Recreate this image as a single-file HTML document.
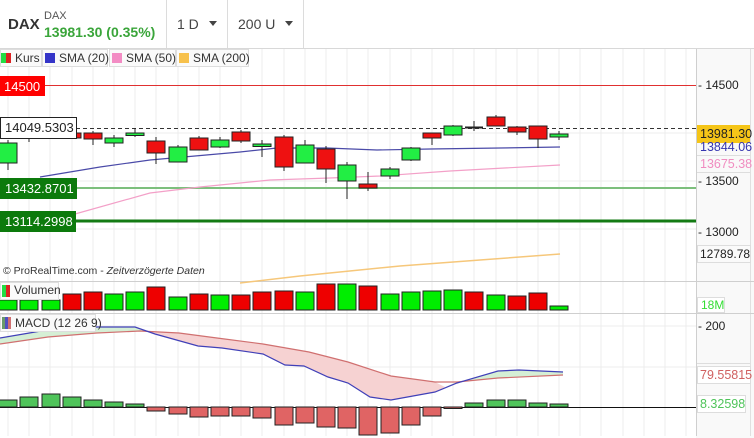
<!DOCTYPE html>
<html><head><meta charset="utf-8"><style>
body{margin:0;width:754px;height:438px;overflow:hidden;background:#fff;font-family:"Liberation Sans",sans-serif;}
svg{display:block}
</style></head><body>
<svg width="754" height="438" viewBox="0 0 754 438" xmlns="http://www.w3.org/2000/svg" font-family="Liberation Sans, sans-serif">
<rect x="0" y="0" width="754" height="48" fill="#fff"/>
<line x1="0" y1="48.5" x2="754" y2="48.5" stroke="#d8d8d8"/>
<line x1="166.5" y1="0" x2="166.5" y2="48" stroke="#dcdcdc"/>
<line x1="227.5" y1="0" x2="227.5" y2="48" stroke="#dcdcdc"/>
<line x1="303.5" y1="0" x2="303.5" y2="48" stroke="#dcdcdc"/>
<text x="8" y="29" font-size="15" font-weight="bold" fill="#333">DAX</text>
<text x="44" y="19" font-size="11" fill="#555">DAX</text>
<text x="44" y="37" font-size="14" font-weight="bold" fill="#3aa53a">13981.30 (0.35%)</text>
<text x="177" y="29" font-size="14" fill="#444">1 D</text>
<path d="M209 21h8l-4 5z" fill="#444"/>
<text x="238" y="29" font-size="14" fill="#444">200 U</text>
<path d="M285 21h8l-4 5z" fill="#444"/>

<g stroke="#ececec" stroke-width="1">
<line x1="8" y1="49" x2="8" y2="436"/><line x1="29" y1="49" x2="29" y2="436"/><line x1="50" y1="49" x2="50" y2="436"/><line x1="72" y1="49" x2="72" y2="436"/><line x1="93" y1="49" x2="93" y2="436"/><line x1="114" y1="49" x2="114" y2="436"/><line x1="135" y1="49" x2="135" y2="436"/><line x1="156" y1="49" x2="156" y2="436"/><line x1="178" y1="49" x2="178" y2="436"/><line x1="199" y1="49" x2="199" y2="436"/><line x1="220" y1="49" x2="220" y2="436"/><line x1="241" y1="49" x2="241" y2="436"/><line x1="262" y1="49" x2="262" y2="436"/><line x1="284" y1="49" x2="284" y2="436"/><line x1="305" y1="49" x2="305" y2="436"/><line x1="326" y1="49" x2="326" y2="436"/><line x1="347" y1="49" x2="347" y2="436"/><line x1="368" y1="49" x2="368" y2="436"/><line x1="390" y1="49" x2="390" y2="436"/><line x1="411" y1="49" x2="411" y2="436"/><line x1="432" y1="49" x2="432" y2="436"/><line x1="453" y1="49" x2="453" y2="436"/><line x1="474" y1="49" x2="474" y2="436"/><line x1="496" y1="49" x2="496" y2="436"/><line x1="517" y1="49" x2="517" y2="436"/><line x1="538" y1="49" x2="538" y2="436"/><line x1="559" y1="49" x2="559" y2="436"/><line x1="580" y1="49" x2="580" y2="436"/><line x1="601" y1="49" x2="601" y2="436"/><line x1="623" y1="49" x2="623" y2="436"/><line x1="644" y1="49" x2="644" y2="436"/><line x1="665" y1="49" x2="665" y2="436"/><line x1="686" y1="49" x2="686" y2="436"/>
<line x1="0" y1="133" x2="696" y2="133"/><line x1="0" y1="181" x2="696" y2="181"/><line x1="0" y1="229" x2="696" y2="229"/><line x1="0" y1="367" x2="696" y2="367"/><line x1="0" y1="326" x2="696" y2="326"/>
</g>

<rect x="696" y="49" width="58" height="389" fill="#f9f9f9"/>
<line x1="696.5" y1="49" x2="696.5" y2="436" stroke="#cfcfcf"/>
<line x1="750.5" y1="49" x2="750.5" y2="436" stroke="#e0e0e0"/>
<line x1="0" y1="281.5" x2="754" y2="281.5" stroke="#cfcfcf"/>
<line x1="0" y1="313.5" x2="754" y2="313.5" stroke="#cfcfcf"/>

<line x1="0" y1="85.5" x2="696" y2="85.5" stroke="#e03030" stroke-width="1"/>
<line x1="76" y1="128.5" x2="696" y2="128.5" stroke="#333" stroke-dasharray="4,3"/>
<line x1="0" y1="188" x2="696" y2="188" stroke="#7dbf7d" stroke-width="2"/>
<line x1="0" y1="221" x2="696" y2="221" stroke="#137a13" stroke-width="3"/>

<polyline points="40,177 100,167 150,160 240,152 277,148 327,148 377,150 430,149 500,148 560,147" fill="none" stroke="#4a4aa8" stroke-width="1.2"/>
<polyline points="75,214 150,193 200,187 270,180 330,178 380,176 450,171 560,165" fill="none" stroke="#f3a0c8" stroke-width="1.2"/>
<polyline points="240,283 300,276 400,266 480,260 560,254" fill="none" stroke="#f6c77a" stroke-width="1.5"/>

<g stroke="#222" stroke-width="1">
<line x1="8" y1="140" x2="8" y2="170"/><rect x="-1" y="143" width="18" height="20" fill="#22ee44"/>
<line x1="29" y1="134" x2="29" y2="142"/>
<rect x="63" y="133" width="18" height="5" fill="#ee1111"/>
<line x1="93" y1="131" x2="93" y2="145"/><rect x="84" y="133" width="18" height="6" fill="#ee1111"/>
<line x1="114" y1="135" x2="114" y2="147"/><rect x="105" y="138" width="18" height="5" fill="#22ee44"/>
<line x1="135" y1="128" x2="135" y2="137"/><rect x="126" y="133" width="18" height="2.5" fill="#22ee44"/>
<line x1="156" y1="137" x2="156" y2="164"/><rect x="147" y="141" width="18" height="12" fill="#ee1111"/>
<line x1="178" y1="145" x2="178" y2="162"/><rect x="169" y="147" width="18" height="15" fill="#22ee44"/>
<line x1="199" y1="136" x2="199" y2="150"/><rect x="190" y="138" width="18" height="12" fill="#ee1111"/>
<line x1="220" y1="137" x2="220" y2="148"/><rect x="211" y="140" width="18" height="7" fill="#22ee44"/>
<line x1="241" y1="130" x2="241" y2="143"/><rect x="232" y="132" width="18" height="9" fill="#ee1111"/>
<line x1="262" y1="140" x2="262" y2="157"/><rect x="253" y="144" width="18" height="2.5" fill="#22ee44"/>
<line x1="284" y1="135" x2="284" y2="171"/><rect x="275" y="137" width="18" height="30" fill="#ee1111"/>
<line x1="305" y1="140" x2="305" y2="163"/><rect x="296" y="145" width="18" height="18" fill="#22ee44"/>
<line x1="326" y1="146" x2="326" y2="183"/><rect x="317" y="149" width="18" height="20" fill="#ee1111"/>
<line x1="347" y1="162" x2="347" y2="199"/><rect x="338" y="165" width="18" height="16" fill="#22ee44"/>
<line x1="368" y1="172" x2="368" y2="191"/><rect x="359" y="184" width="18" height="4" fill="#ee1111"/>
<line x1="390" y1="167" x2="390" y2="179"/><rect x="381" y="169" width="18" height="7" fill="#22ee44"/>
<line x1="411" y1="147" x2="411" y2="161"/><rect x="402" y="148" width="18" height="12" fill="#22ee44"/>
<line x1="432" y1="133" x2="432" y2="145"/><rect x="423" y="133" width="18" height="5" fill="#ee1111"/>
<line x1="453" y1="125" x2="453" y2="136"/><rect x="444" y="126" width="18" height="9" fill="#22ee44"/>
<line x1="474" y1="121" x2="474" y2="131"/><line x1="465" y1="127.5" x2="483" y2="127.5" stroke-width="2"/>
<line x1="496" y1="115" x2="496" y2="126"/><rect x="487" y="117" width="18" height="9" fill="#ee1111"/>
<line x1="517" y1="126" x2="517" y2="135"/><rect x="508" y="127" width="18" height="5" fill="#ee1111"/>
<line x1="538" y1="126" x2="538" y2="148"/><rect x="529" y="126" width="18" height="13" fill="#ee1111"/>
<line x1="559" y1="131" x2="559" y2="140"/><rect x="550" y="134" width="18" height="3" fill="#22ee44"/>
</g>

<rect x="0" y="76" width="45" height="20" fill="#ff0000"/>
<text x="4" y="91" font-size="13" fill="#fff">14500</text>
<rect x="0.5" y="117.5" width="76" height="21" fill="#fff" stroke="#222"/>
<text x="5" y="132" font-size="13" fill="#222">14049.5303</text>
<rect x="0" y="178" width="77" height="21" fill="#0c7a0c"/>
<text x="5" y="193" font-size="13" fill="#fff">13432.8701</text>
<rect x="0" y="211" width="76" height="21" fill="#0c7a0c"/>
<text x="5" y="226" font-size="13" fill="#fff">13114.2998</text>

<g font-size="12" fill="#333">
<rect x="0.5" y="49.5" width="41" height="17" fill="#fafafa" stroke="#ddd"/>
<rect x="1" y="53" width="5" height="10" fill="#22dd44"/><rect x="6" y="53" width="5" height="10" fill="#dd2222"/>
<text x="15" y="62">Kurs</text>
<rect x="42.5" y="49.5" width="65" height="17" fill="#fafafa" stroke="#ddd"/>
<rect x="45" y="53" width="10" height="10" fill="#3535c8"/><text x="59" y="62">SMA (20)</text>
<rect x="109.5" y="49.5" width="66" height="17" fill="#fafafa" stroke="#ddd"/>
<rect x="112" y="53" width="10" height="10" fill="#f38cc4"/><text x="126" y="62">SMA (50)</text>
<rect x="176.5" y="49.5" width="72" height="17" fill="#fafafa" stroke="#ddd"/>
<rect x="179" y="53" width="10" height="10" fill="#f7c14c"/><text x="193" y="62">SMA (200)</text>
</g>

<g font-size="12">
<text x="698" y="89" fill="#222">- 14500</text>
<rect x="697" y="125" width="53" height="18" fill="#f5c518"/>
<text x="700" y="138" fill="#222" font-size="12.5">13981.30</text>
<text x="700" y="151" fill="#3535b0" font-size="12.5">13844.06</text>
<line x1="697" y1="155.5" x2="750" y2="155.5" stroke="#ddd"/>
<text x="700" y="168" fill="#f08cc0" font-size="12.5">13675.38</text>
<line x1="697" y1="172.5" x2="750" y2="172.5" stroke="#ddd"/>
<text x="698" y="185" fill="#222">- 13500</text>
<text x="698" y="236" fill="#222">- 13000</text>
<rect x="697.5" y="245.5" width="53" height="17" fill="#fafafa" stroke="#ddd"/>
<text x="700" y="258" fill="#222">12789.78</text>
</g>
<text x="3" y="274" font-size="10.5" fill="#333">© ProRealTime.com - <tspan font-style="italic">Zeitverzögerte Daten</tspan></text>

<g stroke="#222" stroke-width="1">
<rect x="-1" y="300" width="18" height="10" fill="#00ee00"/>
<rect x="20" y="300" width="18" height="10" fill="#00ee00"/>
<rect x="42" y="300" width="18" height="10" fill="#00ee00"/>
<rect x="63" y="294" width="18" height="16" fill="#ee0000"/>
<rect x="84" y="292" width="18" height="18" fill="#ee0000"/>
<rect x="105" y="294" width="18" height="16" fill="#00ee00"/>
<rect x="126" y="292" width="18" height="18" fill="#00ee00"/>
<rect x="147" y="287" width="18" height="23" fill="#ee0000"/>
<rect x="169" y="297" width="18" height="13" fill="#00ee00"/>
<rect x="190" y="294" width="18" height="16" fill="#ee0000"/>
<rect x="211" y="295" width="18" height="15" fill="#00ee00"/>
<rect x="232" y="295" width="18" height="15" fill="#ee0000"/>
<rect x="253" y="292" width="18" height="18" fill="#ee0000"/>
<rect x="275" y="291" width="18" height="19" fill="#ee0000"/>
<rect x="296" y="292" width="18" height="18" fill="#00ee00"/>
<rect x="317" y="284" width="18" height="26" fill="#ee0000"/>
<rect x="338" y="284" width="18" height="26" fill="#00ee00"/>
<rect x="359" y="286" width="18" height="24" fill="#ee0000"/>
<rect x="381" y="294" width="18" height="16" fill="#00ee00"/>
<rect x="402" y="292" width="18" height="18" fill="#00ee00"/>
<rect x="423" y="291" width="18" height="19" fill="#00ee00"/>
<rect x="444" y="290" width="18" height="20" fill="#00ee00"/>
<rect x="465" y="292" width="18" height="18" fill="#ee0000"/>
<rect x="487" y="295" width="18" height="15" fill="#00ee00"/>
<rect x="508" y="296" width="18" height="14" fill="#ee0000"/>
<rect x="529" y="293" width="18" height="17" fill="#ee0000"/>
<rect x="550" y="306" width="18" height="4" fill="#00ee00"/>
</g>
<rect x="0.5" y="282.5" width="58" height="17" fill="#fafafa" stroke="#ddd"/>
<rect x="2" y="285" width="4" height="12" fill="#22dd44"/><rect x="6" y="285" width="4" height="12" fill="#dd2222"/>
<text x="14" y="294" font-size="12" fill="#333">Volumen</text>
<rect x="697.5" y="297.5" width="27" height="15" fill="#fff" stroke="#ddd"/>
<text x="701" y="309" font-size="12" fill="#33dd33">18M</text>

<polygon points="0,338 41,331 97,327 135,327 148,331 140,331 97,333 48,337 0,344" fill="#d5efd5"/>
<polygon points="148,331 155,334 198,346 222,348 263,354 285,365 304,366 328,377 348,383 370,397 391,400 435,392 445,387 435,382 391,376 348,362 309,352 263,344 217,338 179,333 140,331" fill="#f6d2d2"/>
<polygon points="445,387 457,383 498,371 519,370 563,372 563,375 498,378 457,382" fill="#d5efd5"/>
<polyline points="0,344 48,337 97,333 140,331 179,333 217,338 263,344 309,352 348,362 391,376 435,382 457,382 498,378 563,375" fill="none" stroke="#d07070" stroke-width="1.2"/>
<polyline points="0,338 41,331 97,327 135,327 155,334 198,346 222,348 263,354 285,365 304,366 328,377 348,383 370,397 391,400 435,392 457,383 498,371 519,370 563,372" fill="none" stroke="#4040b8" stroke-width="1.2"/>

<line x1="0" y1="407.5" x2="696" y2="407.5" stroke="#111"/>
<g stroke="#222" stroke-width="1">
<rect x="-1" y="400" width="18" height="7" fill="#4fc45a"/>
<rect x="20" y="397" width="18" height="10" fill="#4fc45a"/>
<rect x="42" y="394" width="18" height="13" fill="#4fc45a"/>
<rect x="63" y="397" width="18" height="10" fill="#4fc45a"/>
<rect x="84" y="400" width="18" height="7" fill="#4fc45a"/>
<rect x="105" y="402" width="18" height="5" fill="#4fc45a"/>
<rect x="126" y="404" width="18" height="3" fill="#4fc45a"/>
<rect x="147" y="407" width="18" height="4" fill="#e06464"/>
<rect x="169" y="407" width="18" height="7" fill="#e06464"/>
<rect x="190" y="407" width="18" height="10" fill="#e06464"/>
<rect x="211" y="407" width="18" height="9" fill="#e06464"/>
<rect x="232" y="407" width="18" height="9" fill="#e06464"/>
<rect x="253" y="407" width="18" height="11" fill="#e06464"/>
<rect x="275" y="407" width="18" height="18" fill="#e06464"/>
<rect x="296" y="407" width="18" height="16" fill="#e06464"/>
<rect x="317" y="407" width="18" height="20" fill="#e06464"/>
<rect x="338" y="407" width="18" height="21" fill="#e06464"/>
<rect x="359" y="407" width="18" height="28" fill="#e06464"/>
<rect x="381" y="407" width="18" height="26" fill="#e06464"/>
<rect x="402" y="407" width="18" height="18" fill="#e06464"/>
<rect x="423" y="407" width="18" height="9" fill="#e06464"/>
<rect x="444" y="407" width="18" height="1.5" fill="#e06464"/>
<rect x="465" y="403" width="18" height="4" fill="#4fc45a"/>
<rect x="487" y="400" width="18" height="7" fill="#4fc45a"/>
<rect x="508" y="400" width="18" height="7" fill="#4fc45a"/>
<rect x="529" y="403" width="18" height="4" fill="#4fc45a"/>
<rect x="550" y="404" width="18" height="3" fill="#4fc45a"/>
</g>
<rect x="0.5" y="314.5" width="95" height="17" fill="#fafafa" stroke="#ddd"/>
<rect x="2" y="317" width="3" height="12" fill="#6a9a6a"/><rect x="5" y="317" width="3" height="12" fill="#5050c0"/><rect x="8" y="317" width="3" height="12" fill="#d07070"/>
<text x="15" y="327" font-size="12" fill="#333">MACD (12 26 9)</text>
<text x="698" y="330" font-size="12" fill="#222">- 200</text>
<line x1="697" y1="363.5" x2="750" y2="363.5" stroke="#ddd"/>
<rect x="697.5" y="366.5" width="53" height="17" fill="#fff" stroke="#ddd"/>
<text x="700" y="379" font-size="12.5" fill="#d06060">79.55815</text>
<rect x="697.5" y="395.5" width="48" height="17" fill="#fff" stroke="#ddd"/>
<text x="700" y="408" font-size="12.5" fill="#4fc45a">8.32598</text>
</svg>
</body></html>
